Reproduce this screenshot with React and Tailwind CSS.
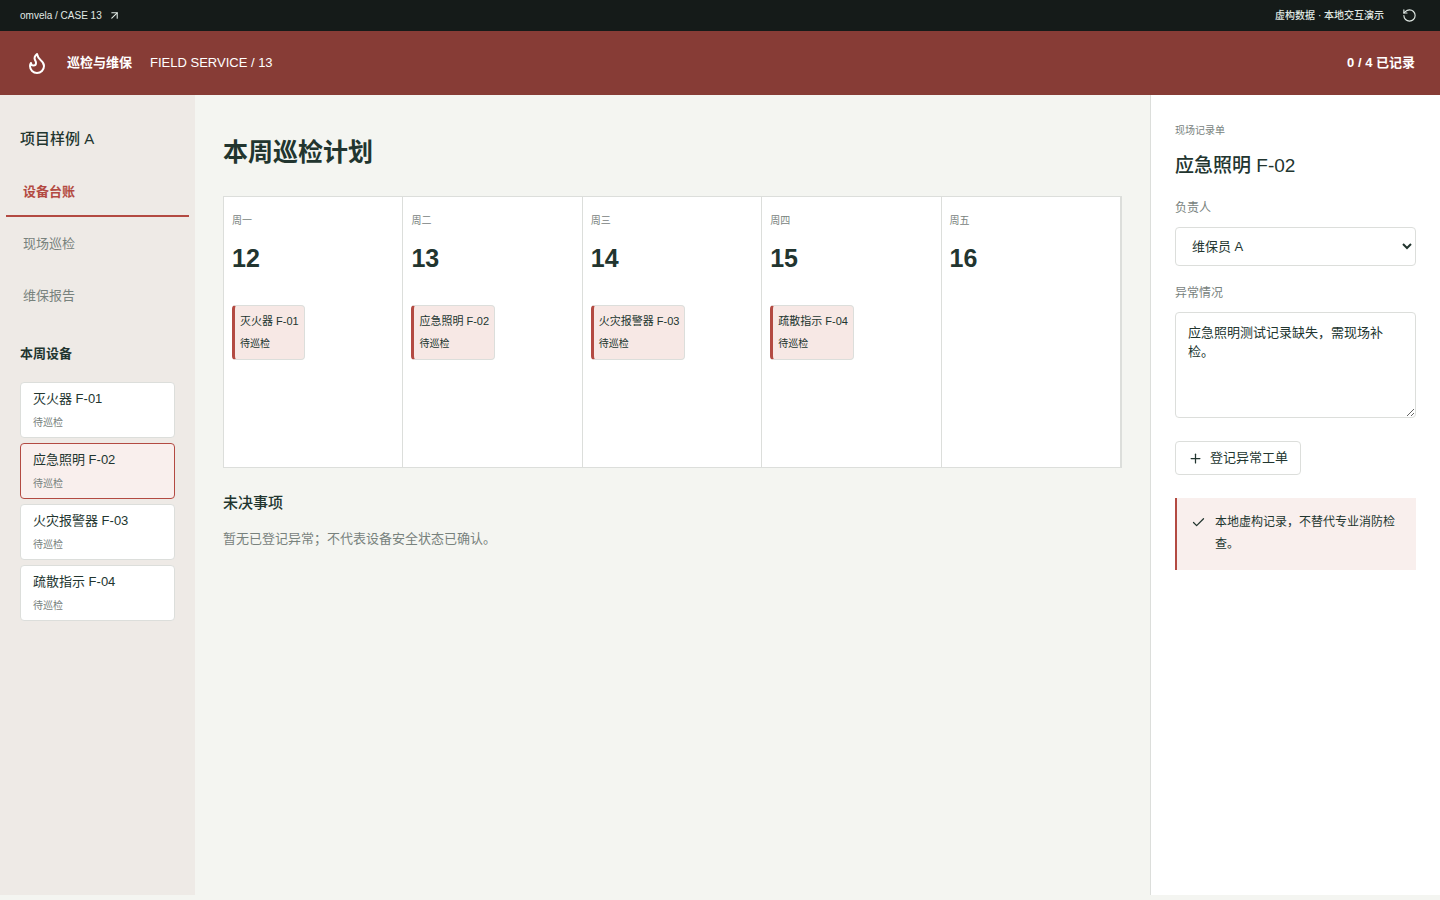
import React, { useState } from 'react';
import { ArrowUpRight, Check, Plus, RotateCcw } from 'lucide-react';

const tabs = ['设备台账', '现场巡检', '维保报告'];

const devices = [
  { id: 'F-01', name: '灭火器 F-01', status: '待巡检' },
  { id: 'F-02', name: '应急照明 F-02', status: '待巡检' },
  { id: 'F-03', name: '火灾报警器 F-03', status: '待巡检' },
  { id: 'F-04', name: '疏散指示 F-04', status: '待巡检' },
];

const days = [
  { label: '周一', date: 12, device: devices[0] },
  { label: '周二', date: 13, device: devices[1] },
  { label: '周三', date: 14, device: devices[2] },
  { label: '周四', date: 15, device: devices[3] },
  { label: '周五', date: 16, device: null },
];

const defaultNote = '应急照明测试记录缺失，需现场补检。';

const FlameIcon = () => (
  <svg
    width="24"
    height="24"
    viewBox="0 0 24 24"
    fill="none"
    stroke="currentColor"
    strokeWidth="2"
    strokeLinecap="round"
    strokeLinejoin="round"
    aria-hidden="true"
  >
    <path d="M8.5 14.5A2.5 2.5 0 0 0 11 12c0-1.38-.5-2-1-3-1.072-2.143-.224-4.054 2-6 .5 2.5 2 4.9 4 6.5 2 1.6 3 3.5 3 5.5a7 7 0 1 1-14 0c0-1.153.433-2.294 1-3a2.5 2.5 0 0 0 2.5 2.5z" />
  </svg>
);

const TopBar = ({ onReset }) => (
  <div className="flex h-[31px] items-center justify-between bg-[#151b19] px-5 text-[10px] font-medium text-[#e0e9e4]">
    <a href="#" className="flex items-center gap-1.5">
      omvela / CASE 13
      <ArrowUpRight size={13} />
    </a>
    <div className="flex items-center gap-[15px]">
      <span>虚构数据 · 本地交互演示</span>
      <button type="button" aria-label="重置" onClick={onReset} className="p-[3px]">
        <RotateCcw size={15} strokeWidth={1.8} />
      </button>
    </div>
  </div>
);

const Header = () => (
  <header className="flex h-16 items-center gap-[18px] bg-[#873c36] px-[25px] text-[13px] text-white">
    <FlameIcon />
    <strong className="font-bold">巡检与维保</strong>
    <span className="font-medium">FIELD SERVICE / 13</span>
    <strong className="ml-auto font-bold">0 / 4 已记录</strong>
  </header>
);

const Sidebar = ({ tab, setTab, selected, setSelected }) => (
  <aside className="bg-[#eeeae6] px-5 pt-8">
    <h2 className="text-[15px] leading-6 font-medium">项目样例 A</h2>
    <nav className="-mx-3.5 mt-3.5 flex flex-col">
      {tabs.map((item) => (
        <button
          key={item}
          type="button"
          onClick={() => setTab(item)}
          className={`h-13 border-b-2 px-[17px] pt-[3px] text-left text-[13px] ${
            tab === item ? 'border-[#b34a42] font-bold text-[#b34a42]' : 'border-transparent text-[#78827d]'
          }`}
        >
          {item}
        </button>
      ))}
    </nav>
    <h3 className="mt-[21px] text-[13px] leading-6 font-bold">本周设备</h3>
    <div className="mt-4 flex flex-col gap-[5px]">
      {devices.map((device) => (
        <button
          key={device.id}
          type="button"
          onClick={() => setSelected(device)}
          className={`flex h-14 flex-col justify-center gap-1 rounded border px-3 pt-px text-left ${
            selected.id === device.id ? 'border-[#b34a42] bg-[#f9efed]' : 'border-[#dcdedb] bg-white'
          }`}
        >
          <span className="text-[13px] leading-5">{device.name}</span>
          <small className="text-[10px] leading-5 text-[#78827d]">{device.status}</small>
        </button>
      ))}
    </div>
  </aside>
);

const WeekPlan = ({ setSelected }) => (
  <main className="px-7 pt-[37px]">
    <h1 className="text-[25px] leading-10 font-bold">本周巡检计划</h1>
    <div className="mt-6 grid min-h-[272px] grid-cols-5 border border-[#dcdedb] bg-white">
      {days.map((day) => (
        <section key={day.date} className="border-r border-[#dcdedb] px-2 pt-3.5">
          <p className="text-[10px] leading-5 text-[#78827d]">{day.label}</p>
          <p className="mt-[11px] text-[25px] leading-8 font-bold">{day.date}</p>
          {day.device && (
            <button
              type="button"
              onClick={() => setSelected(day.device)}
              className="mt-[31px] flex h-[55px] flex-col justify-center gap-[3px] rounded border border-l-3 border-[#dcdedb] border-l-[#b34a42] bg-[#f7e8e5] px-[5px] text-left"
            >
              <span className="text-[11px] leading-5">{day.device.name}</span>
              <small className="text-[10px] leading-5">{day.device.status}</small>
            </button>
          )}
        </section>
      ))}
    </div>
    <h2 className="mt-[23px] text-[15px] leading-6 font-medium">未决事项</h2>
    <p className="mt-3 text-[13px] leading-6 text-[#78827d]">暂无已登记异常；不代表设备安全状态已确认。</p>
  </main>
);

const RecordPanel = ({ selected, owner, setOwner, note, setNote }) => (
  <aside className="border-l border-[#dcdedb] bg-white px-6 pt-[26px]">
    <p className="text-[10px] leading-5 text-[#78827d]">现场记录单</p>
    <h2 className="mt-[9px] text-[19px] leading-8 font-medium">{selected.name}</h2>
    <label htmlFor="owner" className="mt-4 block text-[12px] leading-5 text-[#78827d]">
      负责人
    </label>
    <select
      id="owner"
      value={owner}
      onChange={(e) => setOwner(e.target.value)}
      className="mt-[9px] block h-[39px] w-full rounded border border-[#dcdedb] bg-white px-3 text-[13px]"
    >
      <option>维保员 A</option>
      <option>维保员 B</option>
    </select>
    <label htmlFor="note" className="mt-[17px] block text-[12px] leading-5 text-[#78827d]">
      异常情况
    </label>
    <textarea
      id="note"
      value={note}
      onChange={(e) => setNote(e.target.value)}
      className="mt-[9px] block h-[106px] w-full resize-y rounded border border-[#dcdedb] bg-white px-3 py-2.5 text-[13px] leading-[19px]"
    />
    <button
      type="button"
      className="mt-[23px] flex h-[34px] items-center gap-[7px] rounded border border-[#dcdedb] bg-white px-3 text-[13px]"
    >
      <Plus size={15} />
      登记异常工单
    </button>
    <div className="mt-[23px] flex gap-[9px] border-l-2 border-[#b34a42] bg-[#f9efed] px-3.5 pt-[13px] pb-[15px] text-[12px] leading-[22px]">
      <Check size={15} className="mt-1 shrink-0" />
      <p>本地虚构记录，不替代专业消防检查。</p>
    </div>
  </aside>
);

const App = () => {
  const [tab, setTab] = useState(tabs[0]);
  const [selected, setSelected] = useState(devices[1]);
  const [owner, setOwner] = useState('维保员 A');
  const [note, setNote] = useState(defaultNote);

  const handleReset = () => {
    setTab(tabs[0]);
    setSelected(devices[1]);
    setOwner('维保员 A');
    setNote(defaultNote);
  };

  return (
    <div
      lang="zh-CN"
      className="min-h-screen bg-[#f4f5f1] font-['Liberation_Sans','Noto_Sans_CJK_SC',sans-serif] text-[#22352f]"
    >
      <TopBar onReset={handleReset} />
      <Header />
      <div className="grid min-h-[calc(100vh-100px)] grid-cols-[195px_minmax(0,1fr)_290px]">
        <Sidebar tab={tab} setTab={setTab} selected={selected} setSelected={setSelected} />
        <WeekPlan setSelected={setSelected} />
        <RecordPanel selected={selected} owner={owner} setOwner={setOwner} note={note} setNote={setNote} />
      </div>
    </div>
  );
};

export default App;
